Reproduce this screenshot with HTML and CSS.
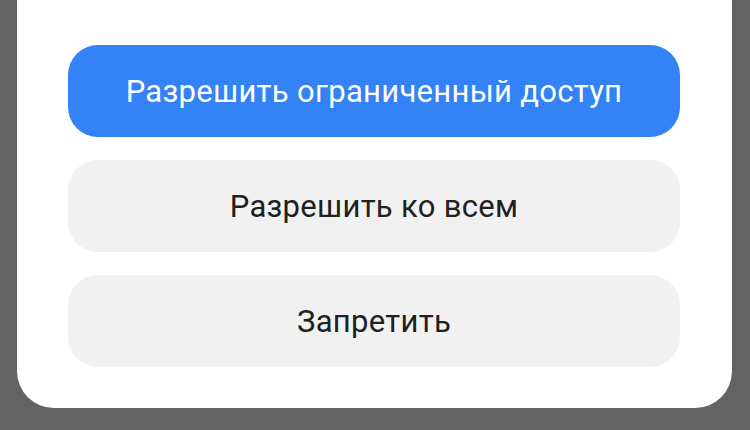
FILE: index.html
```html
<!DOCTYPE html>
<html lang="ru">
<head>
<meta charset="utf-8">
<link rel="stylesheet" href="styles.css">
</head>
<body>
<div class="sheet">
  <button class="btn btn-primary">Разрешить ограниченный доступ</button>
  <button class="btn">Разрешить ко всем</button>
  <button class="btn">Запретить</button>
</div>
</body>
</html>
```
FILE: styles.css
```css
html, body {
  margin: 0;
  padding: 0;
  background: #636363;
  width: 750px;
  height: 430px;
  overflow: hidden;
}
.sheet {
  margin-left: 17px;
  width: 715px;
  box-sizing: border-box;
  background: #ffffff;
  padding: 45px 52px 41px 51px;
  border-radius: 0 0 37px 37px;
  display: flex;
  flex-direction: column;
  gap: 23px;
}
.btn {
  height: 92px;
  border: none;
  border-radius: 30px;
  background: #f1f1f1;
  color: #202020;
  font-family: Roboto, "Noto Sans", sans-serif;
  font-size: 31px;
  font-weight: 400;
  letter-spacing: 0.3px;
  padding: 0;
  margin: 0;
  width: 100%;
}
.btn-primary {
  background: #3383f6;
  color: #ffffff;
}
```
